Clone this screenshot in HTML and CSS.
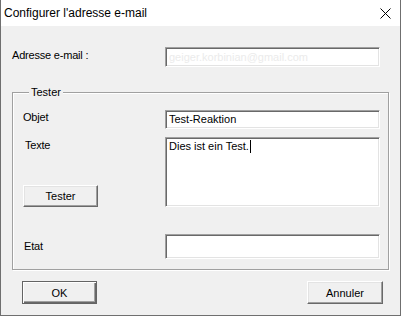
FILE: index.html
```html
<!DOCTYPE html>
<html lang="fr">
<head>
    <meta charset="utf-8">
    <title>Configurer l'adresse e-mail</title>
    <link rel="stylesheet" href="styles.css">
</head>
<body>
    <div class="window">
        <div class="titlebar">
            <span class="title">Configurer l'adresse e-mail</span>
            <svg class="close" width="11" height="11" viewBox="0 0 11 11">
                <path d="M0.5 0.5 L10.5 10.5 M10.5 0.5 L0.5 10.5" stroke="#000" stroke-width="1" fill="none"/>
            </svg>
        </div>
        <div class="content">
            <div class="row email-row">
                <span class="label">Adresse e-mail :</span>
                <div class="field disabled">geiger.korbinian@gmail.com</div>
            </div>
            <fieldset class="group">
                <legend>Tester</legend>
                <div class="row objet-row">
                    <span class="label">Objet</span>
                    <div class="field">Test-Reaktion</div>
                </div>
                <div class="row texte-row">
                    <div class="side">
                        <span class="label">Texte</span>
                        <button class="btn">Tester</button>
                    </div>
                    <div class="field area">Dies ist ein Test.<span class="caret"></span></div>
                </div>
                <div class="row etat-row">
                    <span class="label">Etat</span>
                    <div class="field"></div>
                </div>
            </fieldset>
            <div class="buttons">
                <button class="btn default">OK</button>
                <button class="btn cancel">Annuler</button>
            </div>
        </div>
    </div>
</body>
</html>
```

FILE: styles.css
```css
body {
    margin: 0;
    font-family: "Liberation Sans", Arial, sans-serif;
    font-size: 11px;
    color: #000;
}
.window {
    box-sizing: border-box;
    width: 401px;
    height: 316px;
    border: 1px solid #6f6f6f;
    border-top: none;
    background: #f0f0f0;
    display: flex;
    flex-direction: column;
}
.titlebar {
    height: 26px;
    background: #fff;
    display: flex;
    align-items: center;
    justify-content: space-between;
    padding-left: 3px;
}
.title {
    font-size: 12px;
}
.close {
    margin-right: 9px;
    margin-top: 1px;
}
.content {
    padding-left: 11px;
}
.row {
    display: flex;
}
.label {
    line-height: 13px;
    letter-spacing: -0.2px;
}
.field {
    box-sizing: border-box;
    width: 215px;
    height: 19px;
    background: #fff;
    border: 1px solid;
    border-color: #a0a0a0 #fff #fff #a0a0a0;
    box-shadow: inset 1px 1px 0 #696969, inset -1px -1px 0 #e3e3e3;
    padding: 0 3px;
    line-height: 17px;
    white-space: nowrap;
}
.disabled {
    color: #ebebeb;
}

/* adresse */
.email-row {
    margin-top: 21px;
}
.email-row .label {
    width: 153px;
    padding-top: 2px;
}
.email-row .field {
    height: 20px;
    line-height: 18px;
}

/* groupe Tester */
.group {
    box-sizing: border-box;
    width: 377px;
    margin: 19px 0 0 0;
    padding: 11px 7px 10px 10px;
    border: 1px solid #a0a0a0;
    box-shadow: 1px 1px 0 #fff, inset 1px 1px 0 #fff;
}
.group legend {
    padding: 0 2px;
    margin-left: 6px;
    line-height: 13px;
    background: #f0f0f0;
}
.group .label,
.group .side {
    width: 142px;
}
.objet-row .label {
    padding-top: 1px;
}
.texte-row {
    margin-top: 8px;
}
.side {
    display: flex;
    flex-direction: column;
    justify-content: space-between;
    align-items: flex-start;
}
.side .label {
    padding-top: 2px;
    padding-left: 2px;
}
.area {
    height: 70px;
    padding-top: 2px;
    line-height: 13px;
}
.caret {
    display: inline-block;
    width: 1px;
    height: 13px;
    background: #000;
    vertical-align: top;
    margin-left: 1px;
}
.etat-row {
    margin-top: 27px;
}
.etat-row .label {
    padding-top: 6px;
    padding-left: 1px;
    width: 141px;
}
.etat-row .field {
    height: 25px;
}

/* boutons */
.btn {
    box-sizing: border-box;
    width: 75px;
    height: 22px;
    padding: 0;
    font-family: "Liberation Sans", Arial, sans-serif;
    font-size: 11px;
    color: #000;
    background: #f0f0f0;
    border: 1px solid;
    border-color: #fff #696969 #696969 #fff;
    box-shadow: inset -1px -1px 0 #a0a0a0, inset 1px 1px 0 #e3e3e3;
}
.buttons {
    display: flex;
    justify-content: space-between;
    margin-top: 11px;
    padding-left: 10px;
    padding-right: 17px;
}
.buttons .btn {
    height: 23px;
}
.btn.default {
    border: 1px solid #646464;
    box-shadow: inset 1px 1px 0 #fff, inset -1px -1px 0 #696969, inset -2px -2px 0 #a0a0a0;
}
.btn.cancel {
    width: 76px;
}
```
